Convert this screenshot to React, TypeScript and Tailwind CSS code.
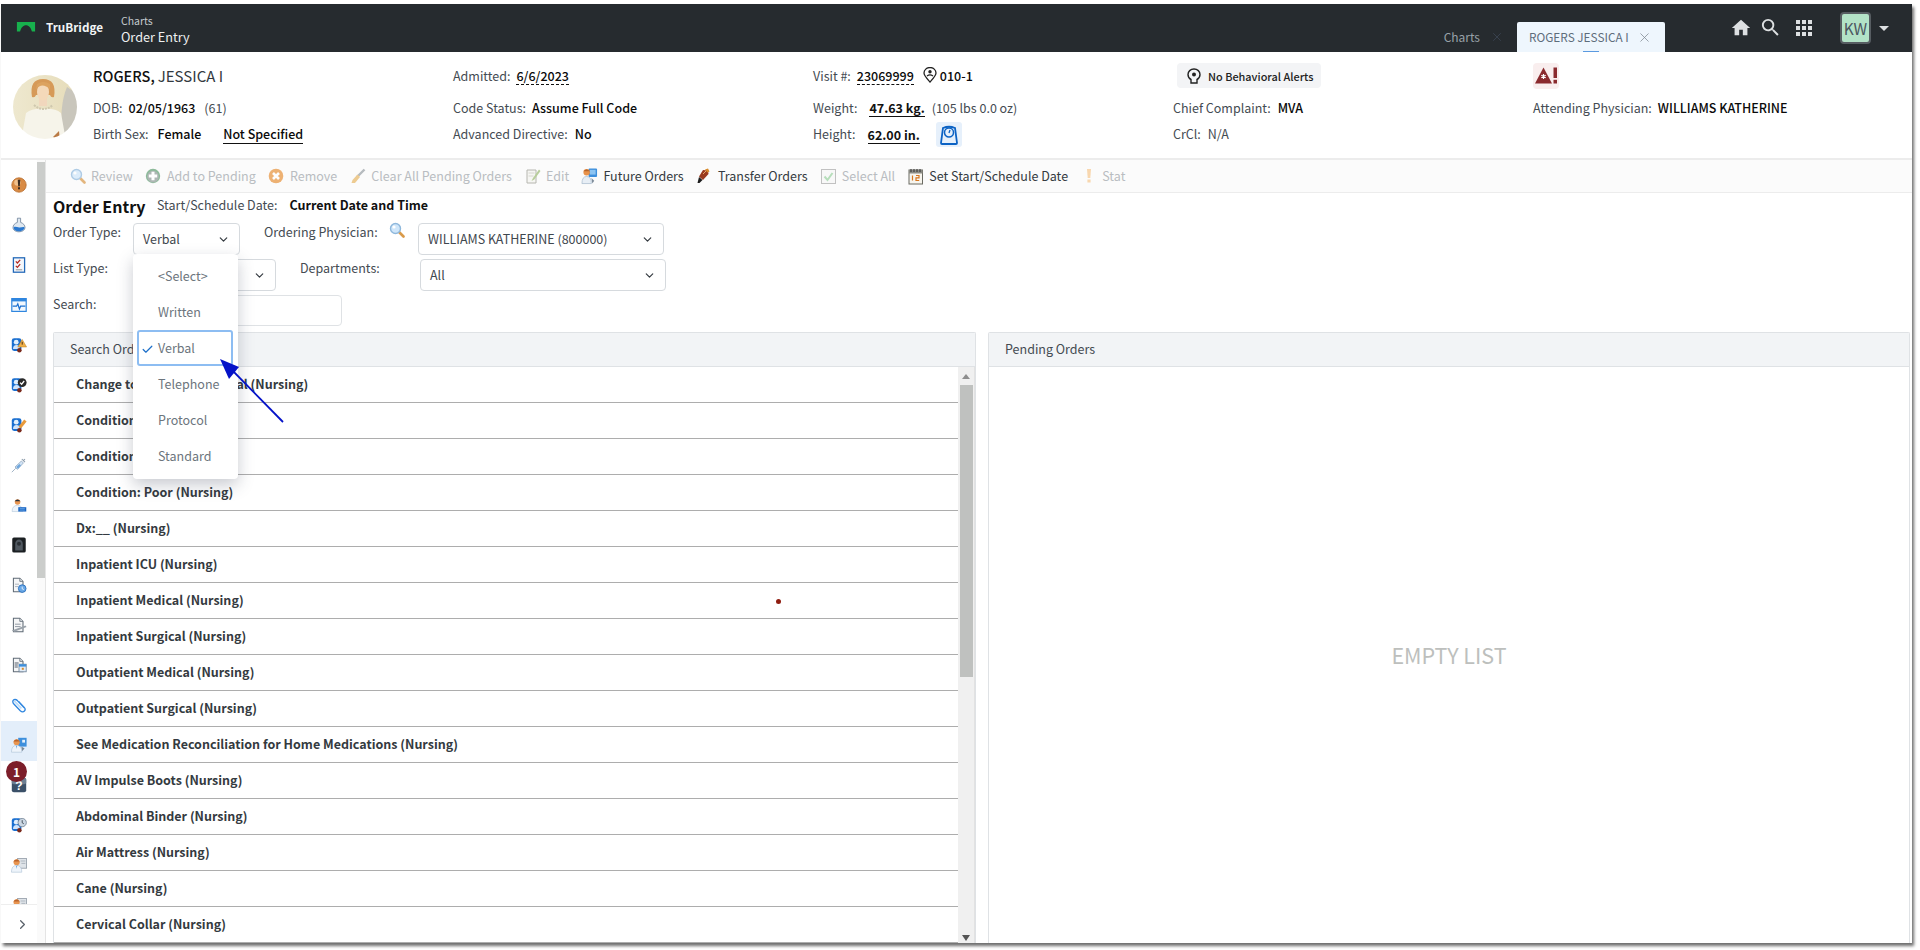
import React from "react";
import { Check, ChevronDown, ChevronRight, X } from "lucide-react";
import { MdHome, MdSearch } from "react-icons/md";

const font = { fontFamily: '"Noto Sans CJK SC", "Noto Sans", sans-serif' };

const Lens = ({ s = 16 }: { s?: number }) => (
  <svg width={s} height={s} viewBox="0 0 16 16">
    <path d="M9.5 9.5 L14.5 14.5" stroke="#d99a4a" strokeWidth="2.6" strokeLinecap="round" />
    <circle cx="6.5" cy="6.5" r="5" fill="#cfe6fa" stroke="#8fb8dc" strokeWidth="1.4" />
    <circle cx="5" cy="5" r="1.6" fill="#fff" />
  </svg>
);
const AddIcon = () => (
  <svg width="16" height="16" viewBox="0 0 16 16">
    <circle cx="8" cy="8" r="7.2" fill="#5f9f72" />
    <circle cx="8" cy="8.6" r="5.8" fill="#8d9a96" />
    <path d="M8 3.8v8.4M3.8 8h8.4" stroke="#fff" strokeWidth="3" />
  </svg>
);
const RemoveIcon = () => (
  <svg width="16" height="16" viewBox="0 0 16 16">
    <circle cx="8" cy="8" r="7.3" fill="#e8923a" />
    <path d="M5 5l6 6M11 5l-6 6" stroke="#fff" strokeWidth="2.6" />
  </svg>
);
const BroomIcon = () => (
  <svg width="16" height="16" viewBox="0 0 16 16">
    <path d="M14.5 1.5L7 9" stroke="#9aa0a6" strokeWidth="2.4" />
    <path d="M7.5 6.5l2.5 2.5-5 6H1.5l1-3z" fill="#e8b765" />
  </svg>
);
const EditIcon = () => (
  <svg width="16" height="16" viewBox="0 0 16 16">
    <path d="M2 2h9v13H2z" fill="#f4f4f0" stroke="#9a9a90" />
    <path d="M3.5 5h6M3.5 8h5" stroke="#c8c8be" />
    <path d="M14 1.5L8 10l-1.5 3 2.8-1.6L15.5 3z" fill="#9dbb74" />
  </svg>
);
const DoctorScreen = () => (
  <svg width="18" height="18" viewBox="0 0 18 18">
    <rect x="8" y="1" width="9" height="9" rx="1" fill="#3d8fdc" />
    <rect x="9.5" y="2.5" width="6" height="5" fill="#8cc4f2" />
    <circle cx="6" cy="5" r="3.4" fill="#e8924a" />
    <path d="M2.5 4 Q6 0 9.5 4z" fill="#b5642a" />
    <path d="M1 17 Q1 9.5 6 9.5 Q11 9.5 11 17z" fill="#e7eef5" stroke="#9fb4c8" strokeWidth=".7" />
    <path d="M11 11l3 3-2 3" fill="#7d8b99" />
  </svg>
);
const TransferIcon = () => (
  <svg width="16" height="16" viewBox="0 0 16 16">
    <path d="M7 2l5 .5 .5 3.5-5.5 6-4-3.5z" fill="#9a3a1e" />
    <path d="M9 1.5l3-1 1.5 3-2 1z" fill="#d88a2a" />
    <path d="M3 9l3.5 3-3 3H1.5z" fill="#1c1c1c" />
    <path d="M7 6l3-3" stroke="#e6a76a" />
  </svg>
);
const CheckBoxIcon = () => (
  <svg width="15" height="15" viewBox="0 0 15 15">
    <rect x=".5" y=".5" width="14" height="14" fill="#f7f7f7" stroke="#a9a9a9" />
    <path d="M3.5 7.5L6.5 11l5-7" stroke="#9ad3a0" strokeWidth="2" fill="none" />
  </svg>
);
const CalendarIcon = () => (
  <svg width="16" height="17" viewBox="0 0 16 17">
    <rect x="1" y="2" width="13.5" height="14" fill="#f7f5ee" stroke="#6a6a62" />
    <rect x="1" y="2" width="13.5" height="3.5" fill="#8b8b84" />
    <path d="M3 1v3M6 1v3M9 1v3M12 1v3" stroke="#333" />
    <path d="M4.5 7.5v5M8 7.5h3v2.4H8v2.6h3.2" stroke="#d8761e" strokeWidth="1.2" fill="none" />
  </svg>
);
const StatIcon = () => (
  <svg width="8" height="16" viewBox="0 0 8 16">
    <path d="M2 1h4l-.7 9H2.7z" fill="#f7c88f" />
    <rect x="2.4" y="11.5" width="3.2" height="3" fill="#f7c88f" />
  </svg>
);

const PersonBlue = ({ children }: { children?: React.ReactNode }) => (
  <svg width="20" height="20" viewBox="0 0 20 20">
    <rect x="1" y="1.5" width="12" height="16" rx="3" fill="#1a6fd0" />
    <circle cx="6.5" cy="6.5" r="3" fill="#dfeefd" />
    <path d="M2.5 15 Q2.5 10 7 10 Q11 10 11 15z" fill="#cfe3fa" />
    <circle cx="10.5" cy="16.5" r="2.8" fill="#7a2a1c" />
    {children}
  </svg>
);
const Doctor = ({ children }: { children?: React.ReactNode }) => (
  <svg width="20" height="20" viewBox="0 0 20 20">
    {children}
    <circle cx="7" cy="6.5" r="3.8" fill="#e89550" />
    <path d="M3 5.5 Q7 1 11 5.5z" fill="#b9642c" />
    <path d="M0.5 19 Q0.5 10.5 7 10.5 Q13.5 10.5 13.5 19z" fill="#eef4fb" stroke="#a9bed4" strokeWidth=".7" />
    <path d="M6.3 11l.7 4 .7-4z" fill="#5f9fdc" />
  </svg>
);
const Doc = ({ children }: { children?: React.ReactNode }) => (
  <svg width="20" height="20" viewBox="0 0 20 20">
    <path d="M3 1.5h8l4 4v13H3z" fill="#f5f6f7" stroke="#5f6a75" strokeWidth="1.3" />
    <path d="M11 1.5v4h4" fill="#dfe3e7" stroke="#5f6a75" />
    {children}
  </svg>
);

const sideIcons: React.ReactNode[] = [
  <svg width="20" height="20" viewBox="0 0 20 20">
    <circle cx="10" cy="10" r="9" fill="#d98b45" stroke="#b86c2c" />
    <circle cx="8" cy="7" r="4" fill="#f0c08c" />
    <path d="M8.4 3.5h3.2l-.6 8H9z" fill="#3a2a20" />
    <rect x="8.8" y="12.8" width="2.4" height="2.6" fill="#3a2a20" />
  </svg>,
  <svg width="18" height="20" viewBox="0 0 18 20">
    <path d="M7 1.5h4v5.2c3.4 1.2 5.5 3.6 5.5 6.5 0 3.2-3.300 5.300-7.500 5.300s-7.500-2.100-7.500-5.300c0-2.900 2.100-5.300 5.500-6.500z" fill="#dfe8f0" stroke="#6d8199" />
    <path d="M2.2 13c2-1.500 4-.2 7 0s4.800-1 6.600-.2c.3 3-3 5-6.800 5s-7-2-6.800-4.800z" fill="#2a78cf" />
  </svg>,
  <svg width="16" height="20" viewBox="0 0 16 20">
    <rect x="1" y="1" width="14" height="18" fill="#f4f7fb" stroke="#2268b8" strokeWidth="1.6" />
    <path d="M4 5.5l2 2 3.500-4M4 11l2 2 3.500-4" stroke="#b3261e" strokeWidth="1.5" fill="none" />
    <path d="M4 16h8" stroke="#7a7a7a" />
  </svg>,
  <svg width="20" height="18" viewBox="0 0 20 18">
    <rect x="1" y="1" width="18" height="16" fill="#f2f8fe" stroke="#2f86df" strokeWidth="1.5" />
    <rect x="1" y="1" width="18" height="3.5" fill="#2f86df" />
    <path d="M2 10.5h5l1.500-3 2 6.500 1.500-3.500h6" stroke="#1a6fd0" strokeWidth="1.5" fill="none" />
  </svg>,
  <PersonBlue>
    <path d="M14 3l5.500 9.500h-11z" fill="#efb04a" stroke="#b57a1c" strokeWidth=".6" />
    <rect x="13.4" y="6" width="1.2" height="3.5" fill="#4a2a10" />
  </PersonBlue>,
  <PersonBlue>
    <circle cx="14" cy="7" r="5.5" fill="#2a2a2a" />
    <path d="M11.3 7l2 2 3.200-4" stroke="#fff" strokeWidth="1.6" fill="none" />
  </PersonBlue>,
  <PersonBlue>
    <path d="M9.5 12l7-9 3 2.500-7 9z" fill="#e89a3c" />
  </PersonBlue>,
  <svg width="20" height="20" viewBox="0 0 20 20">
    <path d="M1 19l5-5" stroke="#9fb2c6" strokeWidth="1.2" />
    <path d="M5 12.5L13 5l2.500 2.500L8 15.500z" fill="#d3e4f5" stroke="#7d97b3" strokeWidth=".8" />
    <path d="M6.5 12.5l4-3.800 2 2-3.800 4z" fill="#6fa6dc" />
    <path d="M13.5 2.5l4 4M15.5 4.5l2-2" stroke="#8a9aa9" strokeWidth="1.3" />
  </svg>,
  <svg width="22" height="20" viewBox="0 0 22 20">
    <circle cx="9" cy="6" r="3.8" fill="#e89550" />
    <path d="M5 5 Q9 0 13 5z" fill="#28313b" />
    <path d="M1.5 19 Q1.5 10.5 9 10.5 Q16 10.5 16 19z" fill="#eef4fb" stroke="#a9bed4" strokeWidth=".7" />
    <path d="M10 13h11v6h-11z" fill="#1a66c4" />
    <path d="M12 15h7M12 17h7" stroke="#8fc2f2" strokeWidth=".8" />
  </svg>,
  <svg width="17" height="19" viewBox="0 0 17 19">
    <rect x=".5" y=".5" width="16" height="18" rx="2" fill="#1b1f22" />
    <path d="M4 16V8c0-3 2-5 4.500-5S13 5 13 8v8z" fill="#505860" />
    <circle cx="8.5" cy="8" r="2.4" fill="#2a2f34" />
  </svg>,
  <Doc>
    <path d="M5 9h5M5 12h4" stroke="#9aa5b0" />
    <circle cx="14" cy="14.5" r="4.8" fill="#6aa8e6" stroke="#1e66b8" />
    <path d="M14 12v2.700l2 1" stroke="#fff" fill="none" />
  </Doc>,
  <Doc>
    <path d="M5 9h7M5 12h7" stroke="#8f98a2" strokeWidth="1.2" />
    <path d="M1 17l17-6.500 1.500 2L4 18.500z" fill="#9aa2aa" />
  </Doc>,
  <Doc>
    <path d="M4.5 7.5h5M4.5 10h4M4.500 12.500h4" stroke="#4d5964" strokeWidth="1.2" />
    <rect x="10" y="9" width="9" height="9.5" fill="#e3edf7" stroke="#6a7f94" />
    <rect x="10" y="9" width="9" height="3" fill="#3d8fdc" />
    <rect x="13.5" y="13.5" width="2.5" height="2.5" fill="#d88a2a" />
  </Doc>,
  <svg width="20" height="20" viewBox="0 0 20 20">
    <path d="M16.5 13.5L8 4.500C6 2.500 3.200 3 2.600 4.500s-.3 3 1 4.300l8 8.400c1.800 1.600 4 1.500 5.200.3s1-3-.3-4.500L9.500 5.500" fill="none" stroke="#2f86df" strokeWidth="1.7" />
    <path d="M4 4.800l9 9.400" stroke="#bcdcf8" strokeWidth="2" />
  </svg>,
  <Doctor>
    <rect x="9" y="1" width="10.5" height="11" fill="#3d8fdc" />
    <rect x="14" y="3.5" width="3.5" height="3.5" fill="#e6f1fb" />
    <path d="M13 12l4 2.500-3.500 3.500" fill="#7a8793" />
  </Doctor>,
  <svg width="20" height="20" viewBox="0 0 20 20">
    <rect x="1" y="1" width="18" height="18" rx="2.5" fill="#3b5068" />
    <rect x="1" y="1" width="18" height="8" rx="2.5" fill="#6d7f92" />
    <text x="10" y="16" textAnchor="middle" fontSize="15" fontWeight="700" fill="#fff" fontFamily="Liberation Sans">?</text>
  </svg>,
  <PersonBlue>
    <circle cx="14" cy="7" r="5.2" fill="#cbd7e3" stroke="#6f7f90" />
    <path d="M14 4v3.200l2 1.300" stroke="#2a3540" fill="none" />
  </PersonBlue>,
  <Doctor>
    <rect x="8" y="2" width="11.5" height="12" fill="#dfe4e9" stroke="#8f9aa5" />
    <path d="M12 5h6M13 8h5" stroke="#a2acb6" />
  </Doctor>,
  <Doctor>
    <rect x="8" y="2" width="11.5" height="12" fill="#dfe4e9" stroke="#8f9aa5" />
    <path d="M12 5h6M13 8h5" stroke="#a2acb6" />
  </Doctor>,
];

const tools: { icon: React.ReactNode; label: string; off: boolean }[] = [
  { icon: <Lens />, label: "Review", off: true },
  { icon: <AddIcon />, label: "Add to Pending", off: true },
  { icon: <RemoveIcon />, label: "Remove", off: true },
  { icon: <BroomIcon />, label: "Clear All Pending Orders", off: true },
  { icon: <EditIcon />, label: "Edit", off: true },
  { icon: <DoctorScreen />, label: "Future Orders", off: false },
  { icon: <TransferIcon />, label: "Transfer Orders", off: false },
  { icon: <CheckBoxIcon />, label: "Select All", off: true },
  { icon: <CalendarIcon />, label: "Set Start/Schedule Date", off: false },
  { icon: <StatIcon />, label: "Stat", off: true },
];

const rows = [
  "Change to Inpatient Medical (Nursing)",
  "Condition: Fair (Nursing)",
  "Condition: Good (Nursing)",
  "Condition: Poor (Nursing)",
  "Dx:__ (Nursing)",
  "Inpatient ICU (Nursing)",
  "Inpatient Medical (Nursing)",
  "Inpatient Surgical (Nursing)",
  "Outpatient Medical (Nursing)",
  "Outpatient Surgical (Nursing)",
  "See Medication Reconciliation for Home Medications (Nursing)",
  "AV Impulse Boots (Nursing)",
  "Abdominal Binder (Nursing)",
  "Air Mattress (Nursing)",
  "Cane (Nursing)",
  "Cervical Collar (Nursing)",
];

const options = ["<Select>", "Written", "Verbal", "Telephone", "Protocol", "Standard"];

const Select = ({ text, w }: { text: string; w: string }) => (
  <div className={`relative h-[32px] ${w} shrink-0 rounded-[4px] border border-[#d6dade] bg-white flex items-center justify-between pl-[9px] pr-[9px] text-[12.5px] text-[#3f474e]`}>
    <span>{text}</span>
    <ChevronDown size={13} strokeWidth={2.2} className="text-[#343a40]" />
  </div>
);

const Lbl = ({ children }: { children: React.ReactNode }) => <span className="text-[#444b52]">{children}</span>;
const Val = ({ children, className = "" }: { children: React.ReactNode; className?: string }) => (
  <span className={`font-semibold text-[#111] ${className}`}>{children}</span>
);
const Med = ({ children, className = "" }: { children: React.ReactNode; className?: string }) => (
  <span className={`font-medium text-[#0a0a0a] ${className}`}>{children}</span>
);

export default function App() {
  return (
    <div style={font} className="relative w-[1920px] h-[950px] overflow-hidden bg-white pt-[4px] pl-[1px] text-[12.5px] leading-[18px]">
      <div className="w-[1911px] h-[939px] flex flex-col bg-white shadow-[2px_3px_3px_#6f6f6f]">
        {/* Top bar */}
        <header className="h-[48px] shrink-0 bg-[#262b2f] flex text-white">
          <div className="flex items-center pl-[15px] pb-[2px]">
            <svg width="20" height="10" viewBox="0 0 20 11">
              <path d="M0 0H20V10.5H16.5C15.5 6 13 3.5 10 3.5S4.5 6 3.5 10.5H0Z" fill="#17b04d" />
            </svg>
            <span className="ml-[10px] text-[11.7px] font-semibold text-[#f2f4f5] mb-[1px]">TruBridge</span>
          </div>
          <div className="ml-[18px] flex flex-col pt-[10px]">
            <span className="text-[10.5px] leading-[14px] text-[#c4c9cd]">Charts</span>
            <span className="text-[12.7px] leading-[18px] text-[#eef0f1]">Order Entry</span>
          </div>
          <div className="ml-auto flex items-end h-full">
            <div className="flex items-center h-[30px] mr-[13px] pb-[1px] text-[12px] text-[#98a1a8]">
              <span>Charts</span>
              <X size={14} strokeWidth={1.4} className="ml-[10px] text-[#3c4654]" />
            </div>
            <div className="relative h-[30px] w-[148px] bg-[#eef6fd] rounded-t-[2px] flex items-center pl-[12px] text-[11.8px] text-[#5e6d7b]">
              <span>ROGERS JESSICA I</span>
              <X size={15} strokeWidth={1.2} className="absolute left-[120px] top-[8px] text-[#7d8790]" />
              <span className="absolute left-[66px] bottom-0 w-[16px] h-[1.5px] bg-[#5b9ae0]" />
            </div>
            <div className="self-start flex items-center h-[48px] ml-[65px] mr-[23px] text-[#dde0e2]">
              <MdHome size={22} className="-mt-[1px]" />
              <MdSearch size={23} className="ml-[7px] -mt-[2px]" />
              <svg width="16" height="16" viewBox="0 0 16 16" className="ml-[14px]" fill="#dde0e2">
                {[0, 6, 12].flatMap((y) => [0, 6, 12].map((x) => <rect key={`${x}-${y}`} x={x} y={y} width="4" height="4" />))}
              </svg>
              <div className="ml-[28px] w-[31px] h-[32px] rounded-[4px] border-2 border-[#575d62] bg-[#b3e3c7] text-[#4b5660] text-[15.5px] flex items-center justify-center">KW</div>
              <div className="ml-[8px] w-0 h-0 border-x-[5px] border-x-transparent border-t-[5px] border-t-[#dde0e2]" />
            </div>
          </div>
        </header>

        {/* Patient banner */}
        <section className="h-[108px] shrink-0 border-b-2 border-[#ececec] flex">
          <svg width="64" height="64" viewBox="0 0 64 64" className="ml-[12px] mt-[23px] shrink-0">
            <defs>
              <clipPath id="pc"><circle cx="32" cy="32" r="32" /></clipPath>
              <linearGradient id="bgp" x1="0" y1="0" x2="1" y2="0">
                <stop offset="0" stopColor="#eee8cf" />
                <stop offset="1" stopColor="#e6dcb9" />
              </linearGradient>
              <filter id="soft"><feGaussianBlur stdDeviation="0.6" /></filter>
            </defs>
            <g clipPath="url(#pc)">
              <g filter="url(#soft)">
                <rect width="64" height="64" fill="url(#bgp)" />
                <path d="M54 12 L66 20 V66 H49 Q46 30 54 12Z" fill="#c9c6bc" />
                <path d="M8 66 L13 38 Q20 33 30 34 Q42 33 48 38 L53 66Z" fill="#f6f4ea" />
                <path d="M21 30 Q30 38 40 30" fill="none" stroke="#cfc8ae" strokeWidth="2" strokeDasharray="2 1" />
                <rect x="26" y="23" width="8" height="8" fill="#f1d7bd" />
                <path d="M19 22 Q16 4 30 4 Q44 4 41 22 Q38 23 37 20 L23 20 Q22 23 19 22Z" fill="#d69a58" />
                <ellipse cx="30" cy="17" rx="6" ry="8.5" fill="#f4d9b9" />
                <path d="M23 14 Q29 7 37 14 L37 9 Q30 5 24 9Z" fill="#dca360" />
                <path d="M40 62 L46 56 L47 66Z" fill="#b97a45" />
              </g>
            </g>
          </svg>
          <div className="ml-[16px] pt-[8px] grid grid-cols-[repeat(5,360px)] grid-rows-[32px_31px_21px]">
            <div className="flex items-center text-[14.5px]">
              <span className="font-medium text-[#111]">ROGERS,</span>
              <span className="ml-[3px] text-[15px] text-[#333a40]">JESSICA I</span>
            </div>
            <div className="flex items-center">
              <Lbl>Admitted:</Lbl>
              <Med className="ml-[6px] leading-[17px] border-b border-dashed border-[#111]">6/6/2023</Med>
            </div>
            <div className="flex items-center">
              <Lbl>Visit #:</Lbl>
              <Med className="ml-[6px] leading-[17px] border-b border-dashed border-[#111]">23069999</Med>
              <svg width="14" height="16" viewBox="0 0 14 16" className="ml-[9px] -mt-[3px]">
                <path d="M7 15 C3 10.5 1 8.5 1 6 A6 5.5 0 0 1 13 6 C13 8.5 11 10.5 7 15Z" fill="none" stroke="#222" strokeWidth="1.3" />
                <circle cx="7" cy="4.8" r="1.7" fill="#222" />
                <path d="M4 9 Q7 6.8 10 9" fill="none" stroke="#222" strokeWidth="1.3" />
              </svg>
              <Med className="ml-[3px] -mt-[1px]">010-1</Med>
            </div>
            <div className="flex items-center">
              <div className="ml-[4px] -mt-[1px] h-[25px] w-[144px] rounded-[4px] bg-[#f3f4f6] flex items-center pl-[10px] text-[10.9px] text-[#222]">
                <svg width="14" height="16" viewBox="0 0 14 16" className="shrink-0">
                  <path d="M4 15v-3.5C2 10.5 1 8.5 1 6.5 1 3.5 3.5 1 7 1s6 2.5 6 5.5c0 2-1 4-3 5V15z" fill="none" stroke="#222" strokeWidth="1.4" />
                  <circle cx="7" cy="6.5" r="2" fill="#222" />
                </svg>
                <span className="ml-[7px] font-medium whitespace-nowrap">No Behavioral Alerts</span>
              </div>
            </div>
            <div className="flex items-center">
              <div className="-mt-[1px] w-[26px] h-[26px] rounded-[4px] bg-[#f9eeee] flex items-center justify-center">
                <svg width="22" height="17" viewBox="0 0 22 16">
                  <path d="M8.5 0L17 16H0Z" fill="#8a2a2e" />
                  <path d="M8.5 6.5v5M6.3 7.8l4.400 2.400M10.7 7.8l-4.400 2.400" stroke="#fff" strokeWidth="1.2" />
                  <rect x="18.5" y="0" width="3.5" height="10.5" fill="#8a2a2e" />
                  <rect x="18.5" y="12.3" width="3.5" height="3.7" fill="#8a2a2e" />
                </svg>
              </div>
            </div>

            <div className="flex items-center">
              <Lbl>DOB:</Lbl>
              <Med className="ml-[6px]">02/05/1963</Med>
              <span className="ml-[9px] text-[#444b52]">(61)</span>
            </div>
            <div className="flex items-center">
              <Lbl>Code Status:</Lbl>
              <Med className="ml-[6px]">Assume Full Code</Med>
            </div>
            <div className="flex items-center">
              <Lbl>Weight:</Lbl>
              <Val className="ml-[12px] leading-[17px] border-b border-[#111] mt-[1px]">47.63 kg.</Val>
              <span className="ml-[7px] text-[#444b52]">(105 lbs 0.0 oz)</span>
            </div>
            <div className="flex items-center">
              <Lbl>Chief Complaint:</Lbl>
              <Med className="ml-[7px]">MVA</Med>
            </div>
            <div className="flex items-center">
              <Lbl>Attending Physician:</Lbl>
              <Med className="ml-[6px]">WILLIAMS KATHERINE</Med>
            </div>

            <div className="flex items-center">
              <Lbl>Birth Sex:</Lbl>
              <Med className="ml-[9px]">Female</Med>
              <Med className="ml-[22px] leading-[18px] border-b border-[#111] mt-[2px]">Not Specified</Med>
            </div>
            <div className="flex items-center">
              <Lbl>Advanced Directive:</Lbl>
              <Med className="ml-[7px]">No</Med>
            </div>
            <div className="flex items-center">
              <Lbl>Height:</Lbl>
              <Val className="ml-[12px] leading-[17px] border-b border-[#111] mt-[2px]">62.00 in.</Val>
              <div className="ml-[16px] mt-[2px] w-[26px] h-[25px] shrink-0 rounded-[3px] bg-[#e6f0fb] flex items-center justify-center">
                <svg width="18" height="20" viewBox="0 0 18 20">
                  <path d="M3 3 Q9 0.5 15 3 L17 18 Q17 19 16 19 H2 Q1 19 1 18Z" fill="none" stroke="#0b62c4" strokeWidth="1.8" />
                  <circle cx="9" cy="7.5" r="4.5" fill="none" stroke="#0b62c4" strokeWidth="1.5" />
                  <path d="M9 8l1-3" stroke="#0b62c4" strokeWidth="1.3" />
                </svg>
              </div>
            </div>
            <div className="flex items-center">
              <Lbl>CrCl:</Lbl>
              <span className="ml-[7px] text-[#444b52]">N/A</span>
            </div>
            <div />
          </div>
        </section>

        {/* Body */}
        <div className="flex-1 min-h-0 flex">
          {/* Icon rail */}
          <aside className="w-[36px] shrink-0 flex flex-col">
            <div className="flex-1 min-h-0 overflow-hidden pt-[1px]">
              {sideIcons.map((ic, i) => (
                <div key={i} className={`relative h-[40px] flex items-center justify-center pt-[8px] [&>svg]:w-[16px] [&>svg]:h-[16px] ${i === 14 ? "bg-[#e3eefa]" : ""}`}>
                  {ic}
                  {i === 15 && (
                    <span className="absolute left-[5px] top-0 w-[21px] h-[21px] rounded-full bg-[#7c1e2a] text-white text-[12px] font-bold flex items-center justify-center">1</span>
                  )}
                </div>
              ))}
            </div>
            <div className="h-[39px] shrink-0 border-t border-[#eeeeee] bg-white flex items-center justify-center pl-[6px]">
              <ChevronRight size={15} strokeWidth={2} className="text-[#59616a]" />
            </div>
          </aside>

          {/* Rail scrollbar */}
          <div className="w-[9px] shrink-0 bg-[#fafafa] border-r border-[#e4e4e4] pt-[2px]">
            <div className="h-[416px] bg-[#cbcdcb]" />
          </div>

          {/* Main */}
          <main className="flex-1 min-w-0 flex flex-col">
            <div className="h-[33px] shrink-0 bg-[#fbfbfb] border-b border-[#ececec] flex items-center pl-[23px] gap-[12.2px]">
              {tools.map((t) => (
                <div key={t.label} className={`flex items-center whitespace-nowrap ${t.off ? "text-[#b9bdc1]" : "text-[#343a40]"}`}>
                  <span className={`w-[17px] h-[18px] mr-[5px] flex items-center justify-center ${t.off ? "opacity-70" : ""}`}>{t.icon}</span>
                  {t.label}
                </div>
              ))}
            </div>

            <div className="relative shrink-0 pl-[7px] h-[139px]">
              <div className="flex items-center h-[30px] pb-[7px]">
                <span className="text-[16px] font-bold text-[#111] w-[104px] mt-[2px] whitespace-nowrap">Order Entry</span>
                <Lbl>Start/Schedule Date:</Lbl>
                <Val className="ml-[12px] font-bold">Current Date and Time</Val>
              </div>
              <div className="flex items-start h-[32px]">
                <span className="w-[80px] text-[#444b52]">Order Type:</span>
                <div className="relative">
                  <Select text="Verbal" w="w-[107px]" />
                  <div className="absolute z-20 left-0 top-[31px] w-[105px] h-[225px] rounded-[4px] bg-white shadow-[0_6px_16px_rgba(60,70,90,0.28)] pt-[4px] pl-[4px] pr-[5px]">
                    {options.map((o) => (
                      <div key={o} className={`relative h-[36px] pl-[19px] flex items-center rounded-[3px] text-[12.5px] text-[#6c757d] ${o === "Verbal" ? "border-2 border-[#8dbdf2]" : "border-2 border-transparent"}`}>
                        {o === "Verbal" && <Check size={13} strokeWidth={2.2} className="absolute left-[2px] top-[11px] text-[#1c6fc9]" />}
                        {o}
                      </div>
                    ))}
                  </div>
                </div>
                <span className="ml-[24px] w-[125px] whitespace-nowrap text-[#444b52]">Ordering Physician:</span>
                <span className="w-[29px] -mt-[1px]"><Lens /></span>
                <Select text="WILLIAMS KATHERINE (800000)" w="w-[246px]" />
              </div>
              <div className="flex items-start h-[32px] mt-[4px]">
                <span className="w-[80px] text-[#444b52]">List Type:</span>
                <Select text="Orders" w="w-[143px]" />
                <span className="ml-[24px] w-[120px] text-[#444b52]">Departments:</span>
                <Select text="All" w="w-[246px]" />
              </div>
              <div className="flex items-start h-[31px] mt-[4px]">
                <span className="w-[80px] text-[#444b52]">Search:</span>
                <div className="w-[209px] h-[31px] rounded-[4px] border border-[#dfe2e5] bg-white" />
              </div>
            </div>

            {/* Panels */}
            <div className="flex-1 min-h-0 flex pl-[7px] pr-[2px] gap-[12px] overflow-hidden">
              <div className="relative w-[923px] shrink-0 border-x border-t border-[#dfe2e5] rounded-t-[2px] flex flex-col overflow-hidden">
                <div className="h-[34px] shrink-0 bg-[#f2f4f6] border-b border-[#dfe2e5] flex items-center pl-[16px] pb-[1px] text-[12.5px] text-[#444b52]">Search Orders</div>
                <div className="flex-1 min-h-0 flex">
                  <div className="flex-1 min-w-0">
                    {rows.map((r) => (
                      <div key={r} className="h-[36px] border-b border-[#adadad] flex items-center pl-[22px] pb-[1px] font-semibold text-[#343a40]">{r}</div>
                    ))}
                  </div>
                  <div className="relative w-[17px] shrink-0 bg-[#f0f0f0] border-r border-[#e2e2e2]">
                    <div className="absolute left-[4px] top-[7px] w-0 h-0 border-x-[4px] border-x-transparent border-b-[5px] border-b-[#8e8e8e]" />
                    <div className="absolute left-[1.5px] top-[18px] w-[13px] h-[292px] bg-[#bfc1bf]" />
                    <div className="absolute left-[4px] bottom-[2px] w-0 h-0 border-x-[4px] border-x-transparent border-t-[6px] border-t-[#555]" />
                  </div>
                </div>
                <span className="absolute left-[722px] top-[266px] w-[5px] h-[5px] rounded-full bg-[#8f1d10]" />
              </div>
              <div className="flex-1 min-w-0 border-x border-t border-[#dfe2e5] rounded-t-[2px] flex flex-col">
                <div className="h-[34px] shrink-0 bg-[#f2f4f6] border-b border-[#dfe2e5] flex items-center pl-[16px] pb-[1px] text-[12.5px] text-[#444b52]">Pending Orders</div>
                <div className="flex-1 flex items-center justify-center text-[21.5px] text-[#bdbfbd]">EMPTY LIST</div>
              </div>
            </div>
          </main>
        </div>
      </div>

      {/* Annotation arrow */}
      <svg width="80" height="80" viewBox="0 0 80 80" className="absolute left-[210px] top-[350px] z-30">
        <path d="M73 72 L20 18" stroke="#0512c8" strokeWidth="1.8" />
        <path d="M10 9 L29 17 L19 29Z" fill="#0512c8" />
      </svg>
    </div>
  );
}
